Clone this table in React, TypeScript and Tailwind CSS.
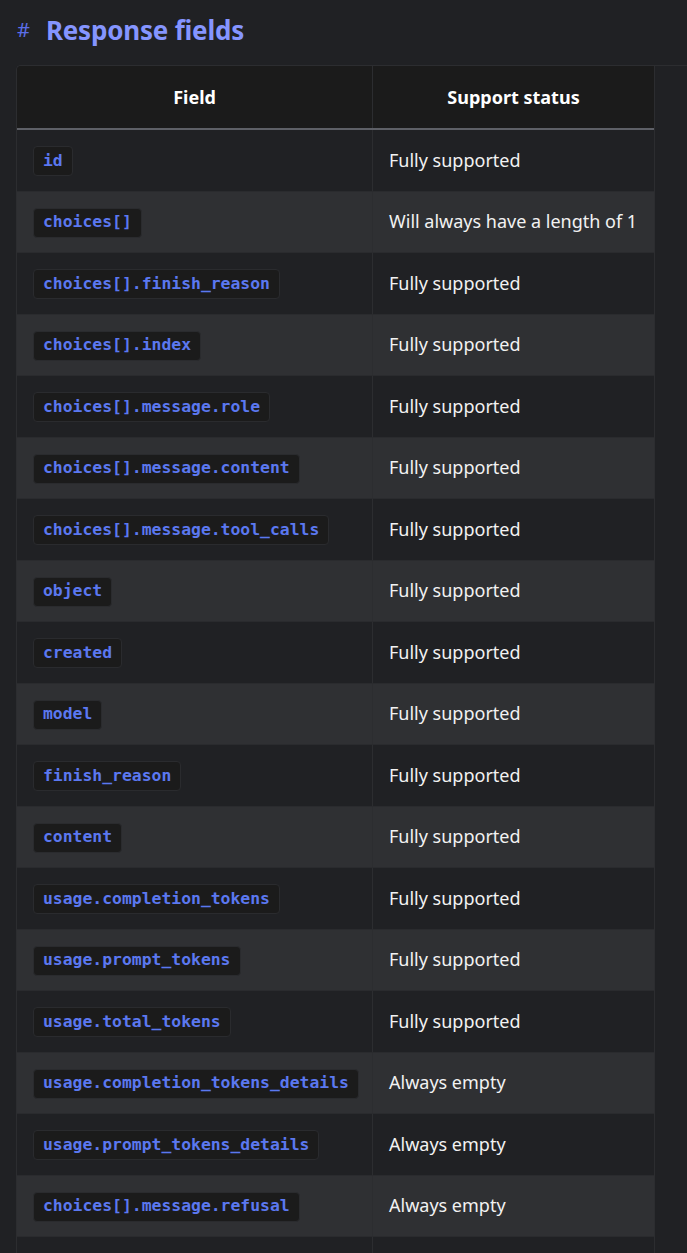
import React from "react";

type Row = { field: string; status: string };

const rows: Row[] = [
  { field: "id", status: "Fully supported" },
  { field: "choices[]", status: "Will always have a length of 1" },
  { field: "choices[].finish_reason", status: "Fully supported" },
  { field: "choices[].index", status: "Fully supported" },
  { field: "choices[].message.role", status: "Fully supported" },
  { field: "choices[].message.content", status: "Fully supported" },
  { field: "choices[].message.tool_calls", status: "Fully supported" },
  { field: "object", status: "Fully supported" },
  { field: "created", status: "Fully supported" },
  { field: "model", status: "Fully supported" },
  { field: "finish_reason", status: "Fully supported" },
  { field: "content", status: "Fully supported" },
  { field: "usage.completion_tokens", status: "Fully supported" },
  { field: "usage.prompt_tokens", status: "Fully supported" },
  { field: "usage.total_tokens", status: "Fully supported" },
  { field: "usage.completion_tokens_details", status: "Always empty" },
  { field: "usage.prompt_tokens_details", status: "Always empty" },
  { field: "choices[].message.refusal", status: "Always empty" },
];

export default function App() {
  return (
    <div className="min-h-screen bg-[#202124] pt-[14px] overflow-hidden font-['Noto_Sans',sans-serif]">
      <h2 className="flex items-center pl-[17px] h-[32px] mb-[19px]">
        <span className="text-[20px] text-[#5b6ee8] mr-[16px] font-normal">#</span>
        <span className="text-[26px] font-bold text-[#8595ff] tracking-[-0.2px]">Response fields</span>
      </h2>

      <div className="ml-[16px] w-[700px] border-l border-t border-[#2c2d30] rounded-tl-[5px] overflow-hidden">
        <div className="w-[638px] border-r border-[#2c2d30]">
          <div className="flex h-[64px] bg-[#1b1b1b] border-b-2 border-[#5e6067] text-white font-bold text-[18px]">
            <div className="w-[356px] flex items-center justify-center border-r border-[#2c2d30]">Field</div>
            <div className="flex-1 flex items-center justify-center">Support status</div>
          </div>
          {rows.map((r, i) => (
            <div
              key={r.field}
              className={
                "flex h-[61.5px] border-b border-[#2a2b2e] " +
                (i % 2 === 0 ? "bg-[#202124]" : "bg-[#2f3033]")
              }
            >
              <div className="w-[356px] flex items-center pl-[16px] pt-[2px] border-r border-[#2c2d30]">
                <code className="px-[9px] h-[30px] flex items-center rounded-[4px] bg-[#1b1b1b] border border-[#2a2b2e] text-[#5b78f0] font-bold text-[16.4px] font-['DejaVu_Sans_Mono',monospace]">
                  {r.field}
                </code>
              </div>
              <div className="flex-1 flex items-center pl-[16px] text-[18px] text-[#f2f2f2]">{r.status}</div>
            </div>
          ))}
          <div className="flex h-[61.5px] bg-[#202124]">
            <div className="w-[356px] border-r border-[#2c2d30]" />
            <div className="flex-1" />
          </div>
        </div>
      </div>
    </div>
  );
}
